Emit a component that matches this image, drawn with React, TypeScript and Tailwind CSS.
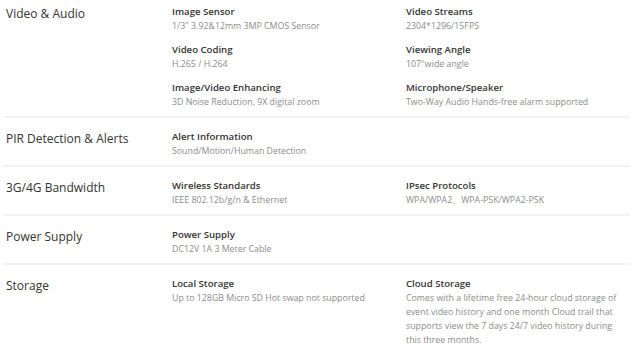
const specs = [
  {
    label: 'Video & Audio',
    first: true,
    items: [
      { title: 'Image Sensor', text: '1/3" 3.92&12mm 3MP CMOS Sensor' },
      { title: 'Video Streams', text: '2304*1296/15FPS' },
      { title: 'Video Coding', text: 'H.265 / H.264' },
      { title: 'Viewing Angle', text: '107°wide angle' },
      { title: 'Image/Video Enhancing', text: '3D Noise Reduction, 9X digital zoom' },
      { title: 'Microphone/Speaker', text: 'Two-Way Audio Hands-free alarm supported' },
    ],
  },
  {
    label: 'PIR Detection & Alerts',
    items: [{ title: 'Alert Information', text: 'Sound/Motion/Human Detection' }],
  },
  {
    label: '3G/4G Bandwidth',
    items: [
      { title: 'Wireless Standards', text: 'IEEE 802.12b/g/n & Ethernet' },
      { title: 'IPsec Protocols', text: 'WPA/WPA2、WPA-PSK/WPA2-PSK' },
    ],
  },
  {
    label: 'Power Supply',
    items: [{ title: 'Power Supply', text: 'DC12V 1A 3 Meter Cable' }],
  },
  {
    label: 'Storage',
    last: true,
    items: [
      { title: 'Local Storage', text: 'Up to 128GB Micro SD Hot swap not supported' },
      {
        title: 'Cloud Storage',
        text: 'Comes with a lifetime free 24-hour cloud storage of event video history and one month Cloud trail that supports view the 7 days 24/7 video history during this three months.',
      },
    ],
  },
];

export default function App() {
  return (
    <div className="w-[640px] h-[345px] overflow-hidden bg-white font-['Open_Sans',sans-serif]">
      <div className="ml-[4px] w-[626px]">
        {specs.map((row) => (
          <div
            key={row.label}
            className={`flex pl-[2px] ${row.first ? 'pt-[5px]' : 'pt-[12px]'} ${row.last ? '' : 'pb-[7px] border-b-2 border-[#f2f2f2]'}`}
          >
            <div className="w-[166px] shrink-0 text-[12px] leading-[18px] text-[#333]">{row.label}</div>
            <div className="grid grid-cols-[234px_1fr] gap-y-[10px] flex-1">
              {row.items.map((it) => (
                <div key={it.title} className="max-w-[218px]">
                  <div className="text-[9.6px] leading-[14px] font-semibold text-[#333]">{it.title}</div>
                  <div className="text-[8.8px] leading-[14px] text-[#8c8c8c]">{it.text}</div>
                </div>
              ))}
            </div>
          </div>
        ))}
      </div>
    </div>
  );
}
